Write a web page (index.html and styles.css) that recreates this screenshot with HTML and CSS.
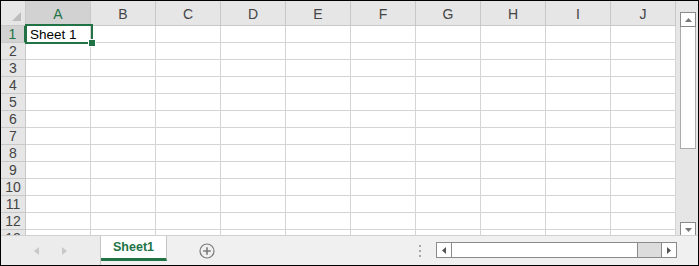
FILE: index.html
```html
<!DOCTYPE html>
<html>
<head>
<meta charset="utf-8">
<link rel="stylesheet" href="styles.css">
</head>
<body>
<div class="frame">
  <div class="top">
    <div class="sheet">
      <div class="grid">
        <div class="hd corner"><span class="tri"></span></div>
        <div class="hd col sel">A</div>
        <div class="hd col">B</div>
        <div class="hd col">C</div>
        <div class="hd col">D</div>
        <div class="hd col">E</div>
        <div class="hd col">F</div>
        <div class="hd col">G</div>
        <div class="hd col">H</div>
        <div class="hd col">I</div>
        <div class="hd col">J</div>
      </div>
      <div class="grid rows" id="rows"></div>
      <div class="selection"><span class="handle"></span></div>
    </div>
    <div class="vscroll">
      <div class="vbtn up"><svg width="7" height="4" viewBox="0 0 7 4"><path d="M0 4L3.5 0L7 4Z" fill="#777"/></svg></div>
      <div class="vthumb"></div>
      <div class="vtrack"></div>
      <div class="vbtn down"><svg width="7" height="4" viewBox="0 0 7 4"><path d="M0 0L3.5 4L7 0Z" fill="#777"/></svg></div>
    </div>
  </div>
  <div class="strip">
    <div class="nav">
      <svg width="5" height="8" viewBox="0 0 5 8"><path d="M5 0L0 4L5 8Z" fill="#c8c8c8"/></svg>
      <svg width="5" height="8" viewBox="0 0 5 8"><path d="M0 0L5 4L0 8Z" fill="#c8c8c8"/></svg>
    </div>
    <div class="tab">Sheet1</div>
    <div class="add">
      <svg width="16" height="16" viewBox="0 0 16 16"><circle cx="8" cy="8" r="7" fill="none" stroke="#7a7a7a" stroke-width="1.2"/><path d="M8 4.2V11.8M4.2 8H11.8" stroke="#7a7a7a" stroke-width="1.6"/></svg>
    </div>
    <div class="spacer"></div>
    <div class="dots"><i></i><i></i><i></i></div>
    <div class="hscroll">
      <div class="hbtn left"><svg width="4" height="7" viewBox="0 0 4 7"><path d="M4 0L0 3.5L4 7Z" fill="#555"/></svg></div>
      <div class="hthumb"></div>
      <div class="htrack"></div>
      <div class="hbtn right"><svg width="4" height="7" viewBox="0 0 4 7"><path d="M0 0L4 3.5L0 7Z" fill="#555"/></svg></div>
    </div>
  </div>
</div>
<script>
  var rows = document.getElementById('rows');
  var html = '';
  for (var r = 1; r <= 13; r++) {
    html += '<div class="hd rowh' + (r === 1 ? ' sel' : '') + '">' + r + '</div>';
    for (var c = 0; c < 10; c++) {
      html += '<div class="cell">' + (r === 1 && c === 0 ? 'Sheet 1' : '') + '</div>';
    }
  }
  rows.innerHTML = html;
</script>
</body>
</html>
```
FILE: styles.css
```css
* { box-sizing: border-box; }
html, body { margin: 0; padding: 0; background: #fff; }
body { font-family: "Liberation Sans", Arial, sans-serif; }

.frame {
  width: 699px;
  height: 266px;
  border: 1px solid #000;
  display: flex;
  flex-direction: column;
  overflow: hidden;
  background: #f0f0f0;
}

.top {
  height: 234px;
  display: flex;
}

.sheet {
  position: relative;
  width: 675px;
  height: 234px;
  overflow: hidden;
  background: #fff;
}

.grid {
  display: grid;
  grid-template-columns: 25px repeat(10, 65px);
  grid-auto-rows: 17px;
}
.grid:first-child { grid-auto-rows: 25px; }

.hd {
  background: #e6e6e6;
  color: #444;
  font-size: 14px;
  border-right: 1px solid #c8c8c8;
  border-bottom: 1px solid #c8c8c8;
  display: flex;
  align-items: center;
  justify-content: center;
}
.hd.col { padding-top: 2px; }
.hd.corner { position: relative; }
.tri {
  position: absolute;
  right: 4px;
  bottom: 4px;
  width: 0;
  height: 0;
  border-left: 9px solid transparent;
  border-bottom: 9px solid #bdbdbd;
}
.hd.sel {
  background: #d2d2d2;
  color: #217346;
}
.hd.col.sel { border-bottom: 2px solid #217346; }
.rowh { font-size: 14px; }
.rowh.sel { border-right: 2px solid #217346; }

.cell {
  border-right: 1px solid #d4d4d4;
  border-bottom: 1px solid #d4d4d4;
  font-size: 13.5px;
  color: #000;
  padding-left: 4px;
  display: flex;
  align-items: center;
  white-space: nowrap;
}

.selection {
  position: absolute;
  left: 24px;
  top: 23px;
  width: 68px;
  height: 20px;
  border: 2px solid #217346;
}
.handle {
  position: absolute;
  right: -4px;
  bottom: -4px;
  width: 6px;
  height: 6px;
  background: #217346;
  outline: 1px solid #fff;
}

.vscroll {
  width: 22px;
  height: 236px;
  background: #e6e6e6;
  display: flex;
  flex-direction: column;
  padding: 11px 2px 0 4px;
}
.vbtn {
  height: 15px;
  border: 1px solid #8a8a8a;
  background: #fff;
  display: flex;
  align-items: center;
  justify-content: center;
}
.vthumb {
  height: 122px;
  background: #fff;
  border: 1px solid #ababab;
  border-top: none;
}
.vtrack { flex: 1; }

.strip {
  flex: 1;
  display: flex;
  align-items: center;
  background: #f0f0f0;
  border-top: 1px solid #d0d0d0;
}
.nav {
  width: 100px;
  align-self: stretch;
  display: flex;
  align-items: center;
  justify-content: center;
  gap: 23px;
  border-right: 1px solid #c6c6c6;
  background: #ececec;
}
.tab {
  width: 66px;
  align-self: stretch;
  background: #fff;
  border-right: 1px solid #c6c6c6;
  border-bottom: 3px solid #217346;
  margin-bottom: 4px;
  color: #217346;
  font-weight: bold;
  font-size: 12.5px;
  display: flex;
  align-items: center;
  justify-content: center;
}
.add {
  width: 80px;
  display: flex;
  justify-content: center;
}
.spacer { flex: 1; }
.dots {
  display: flex;
  flex-direction: column;
  gap: 3px;
  margin-right: 15px;
}
.dots i {
  display: block;
  width: 2px;
  height: 2px;
  background: #a8a8a8;
}
.hscroll {
  width: 241px;
  height: 16px;
  display: flex;
  border: 1px solid #8a8a8a;
  margin-right: 21px;
  margin-bottom: 1px;
}
.hbtn {
  width: 15px;
  background: #fff;
  display: flex;
  align-items: center;
  justify-content: center;
}
.hbtn.left { border-right: 1px solid #8a8a8a; }
.hbtn.right { border-left: 1px solid #8a8a8a; }
.hthumb {
  width: 186px;
  background: #fff;
  border-right: 1px solid #8a8a8a;
}
.htrack { flex: 1; background: #dcdcdc; }
```
